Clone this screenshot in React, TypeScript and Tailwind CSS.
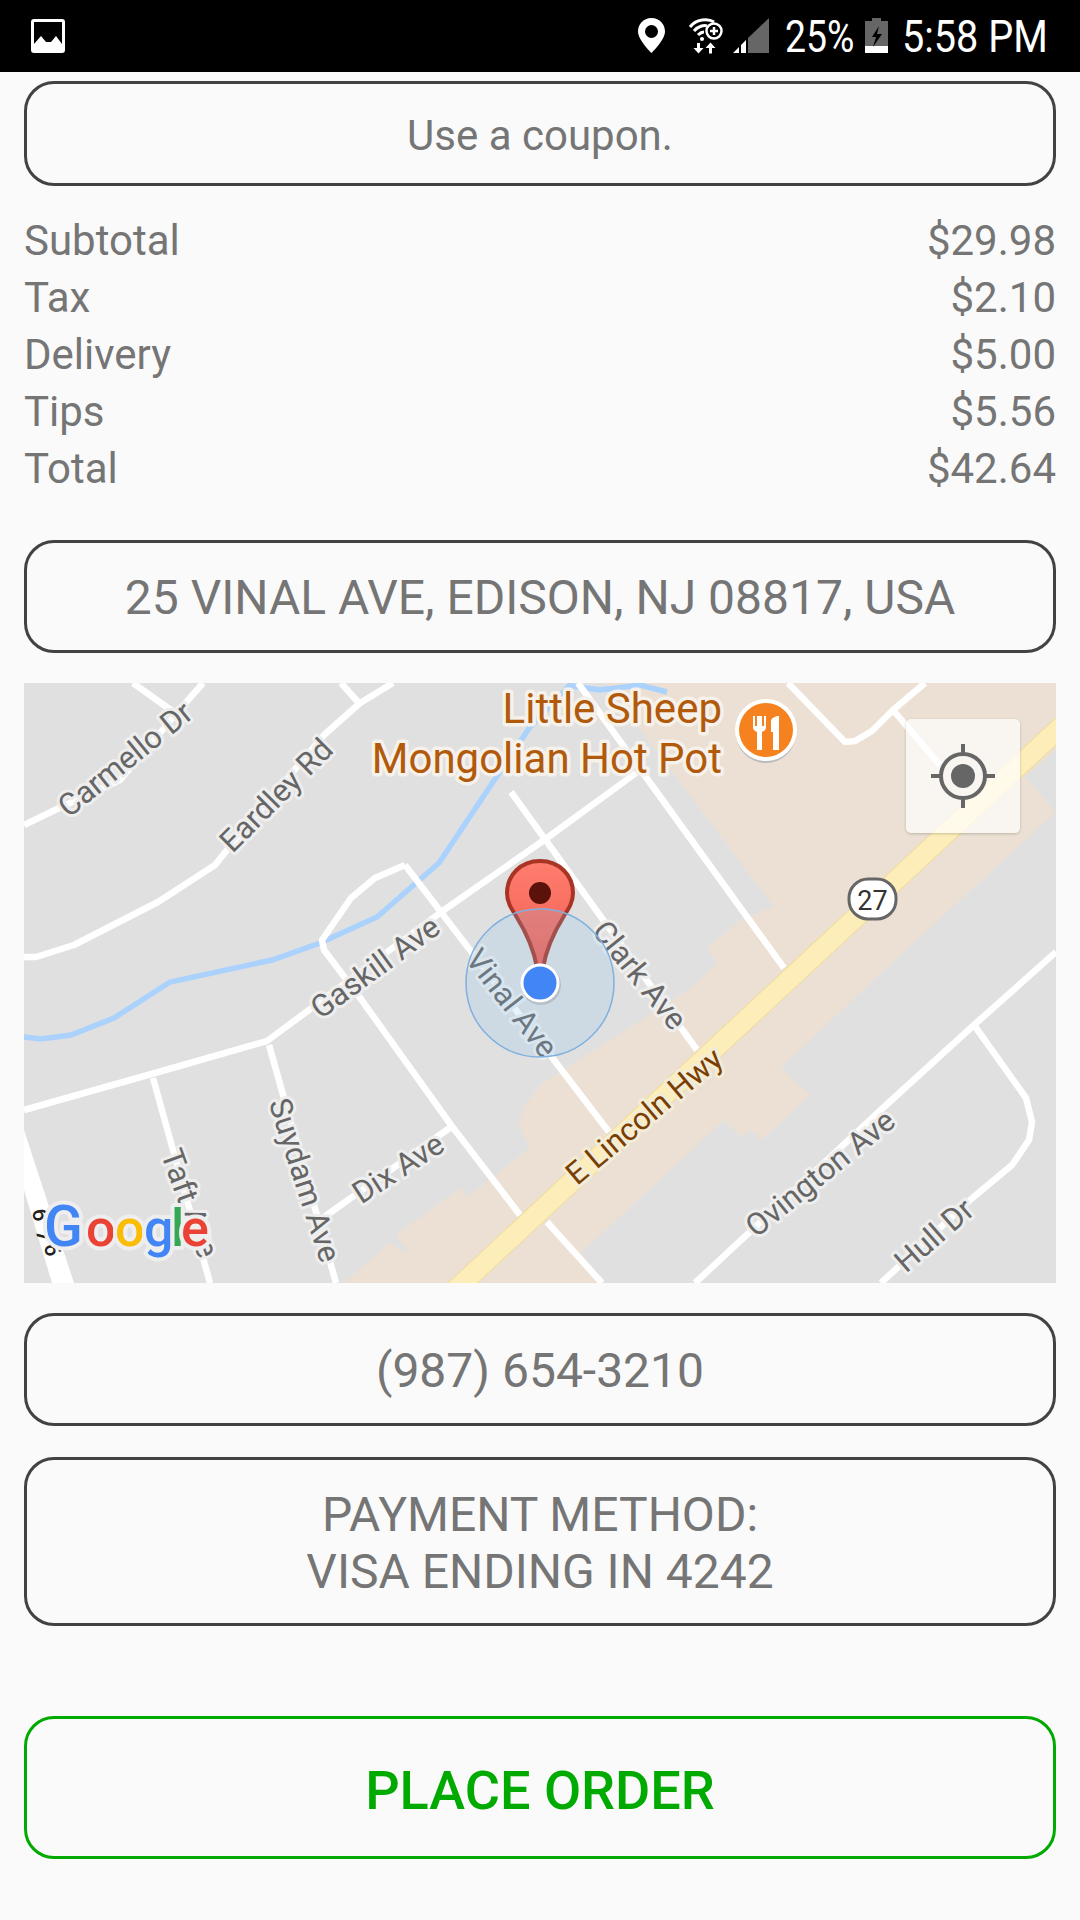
const rows = [
  { label: "Subtotal", value: "$29.98" },
  { label: "Tax", value: "$2.10" },
  { label: "Delivery", value: "$5.00" },
  { label: "Tips", value: "$5.56" },
  { label: "Total", value: "$42.64" },
];

const roads = [
  "M24 825 L57 809 L120 780 L182 707 L203 683",
  "M133 683 L175 713",
  "M24 957 L36 957 L74 945 L158 902 L215 865 L227 850 L324 735 L360 703 L393 683",
  "M341 683 L358 702",
  "M24 1110 L155 1073 L267 1041 L444 910 L547 838 L636 773",
  "M153 1078 L210 1283",
  "M269 1045 L336 1283",
  "M324 1217 L451 1127",
  "M578 683 L643 773 L784 968",
  "M511 792 L697 1050",
  "M405 865 L375 878 L351 898 L322 940 L324 950 L358 995 L451 1125 L520 1215",
  "M547 1222 L602 1283",
  "M405 865 L609 1132",
  "M695 1283 L884 1107 L974 1025 L1056 952",
  "M974 1025 L1026 1098 L1032 1122 L1029 1140 L1012 1165 L970 1200 L881 1283",
  "M788 683 L845 742 L855 741 L872 731 L893 710 L925 683",
  "M893 710 L940 765",
];

const labels = [
  { text: "Carmello Dr", x: 125, y: 759, a: -39 },
  { text: "Eardley Rd", x: 276, y: 795, a: -45 },
  { text: "Gaskill Ave", x: 375, y: 967, a: -36 },
  { text: "Vinal Ave", x: 512, y: 1003, a: 52 },
  { text: "Clark Ave", x: 640, y: 975, a: 51 },
  { text: "Ovington Ave", x: 820, y: 1173, a: -39 },
  { text: "Hull Dr", x: 934, y: 1235, a: -41 },
  { text: "Dix Ave", x: 398, y: 1168, a: -33 },
  { text: "Suydam Ave", x: 305, y: 1180, a: 72 },
  { text: "Taft Ave", x: 190, y: 1203, a: 70 },
];

const StatusBar = () => (
  <div className="h-[72px] bg-black relative">
    <svg width="1080" height="72" viewBox="0 0 1080 72" className="block">
      {/* picture icon */}
      <rect x="31" y="19" width="34" height="34" rx="3" fill="#fff" />
      <path d="M34 22H62V44L56 36L51 42L46 42L41 36L34 44Z" fill="#000" />
      {/* location pin */}
      <path
        fillRule="evenodd"
        d="M651.500 18C643 18 638 24.500 638 31.500C638 40 651.500 53 651.500 53C651.500 53 665 40 665 31.500C665 24.500 660 18 651.500 18ZM651.500 25A6.500 6.500 0 1 1 651.500 38A6.500 6.500 0 1 1 651.500 25Z"
        fill="#fff"
      />
      {/* wifi with plus and arrows */}
      <g fill="none" stroke="#fff" strokeWidth="3">
        <path d="M690 27C696 19 708 18 714 22" />
        <path d="M694 31C698 26 704 25 707 26" />
        <path d="M698 35C700 33 702 32 704 32" />
      </g>
      <circle cx="702" cy="39" r="2" fill="#fff" />
      <circle cx="714" cy="31" r="7.500" fill="#000" stroke="#fff" strokeWidth="2.500" />
      <path d="M714 27V35M710 31H718" stroke="#fff" strokeWidth="2.500" />
      <path d="M697 43H700V48H703.500L698.500 53.500L693.500 48H697Z" fill="#fff" />
      <path d="M709 53.500H712V48H715.500L710.500 42.500L705.500 48H709Z" fill="#fff" />
      {/* signal */}
      <path d="M748 38L769 18V53H748Z" fill="#666" />
      <path d="M733 53L739 47V53ZM741 45L746 40V53H741Z" fill="#fff" />
      {/* battery */}
      <path d="M872 18H881V21H888V46H865V21H872Z" fill="#666" />
      <rect x="865" y="46" width="23" height="7" fill="#fff" />
      <path d="M879 26L872 37H876L873 47L882 34H877Z" fill="#000" />
    </svg>
    <span className="absolute left-[785px] top-3 origin-left scale-x-[0.85] text-[44px] leading-[50px] text-white">25%</span>
    <span className="absolute left-[902px] top-3 origin-left scale-x-[0.9] text-[44px] leading-[50px] text-white">5:58 PM</span>
  </div>
);

const MapView = () => (
  <div className="relative mx-6 mt-[30px] h-[600px] overflow-hidden">
    <svg width="1032" height="600" viewBox="24 683 1032 600" className="block">
      <rect x="24" y="683" width="1032" height="600" fill="#e0e0e0" />
      {/* commercial area */}
      <path
        d="M606 683 L1056 683 L1056 812 L884 970 L781 1068 L810 1095 L762 1140 L750 1130 L741 1137 L724 1120 L581 1253 L605 1283 L344 1283 L389 1243 L408 1253 L396 1235 L460 1188 L467 1197 L492 1178 L530 1147 L518 1125 L524 1107 L540 1085 L688 990 L717 963 L707 948 L743 918 L774 907 L638 726 Z"
        fill="#ebe0d3"
      />
      <path d="M1025 777 L1056 750 L1056 812 Z" fill="#e0e0e0" />
      {/* river */}
      <path
        d="M24 1037 L41 1039 L71 1035 L114 1018 L170 982 L272 960 L320 943 L377 917 L439 863 L499 773 L530 727 L572 683 M572 686 L600 690 L640 685 L667 692"
        fill="none"
        stroke="#aad2fd"
        strokeWidth="5.500"
      />
      {roads.map((d, i) => (
        <path key={i} d={d} fill="none" stroke="#fff" strokeWidth="6.500" strokeLinejoin="round" />
      ))}
      <path d="M24 1130 L74 1283 L52 1283 L24 1190 Z" fill="#fff" />
      {/* highway */}
      <path d="M452 1293 L1067 721" stroke="#efdc9f" strokeWidth="21" fill="none" />
      <path d="M452 1293 L1067 721" stroke="#fdeeb9" strokeWidth="19" fill="none" />
      {labels.map((l) => (
        <text
          key={l.text}
          transform={`translate(${l.x} ${l.y}) rotate(${l.a})`}
          textAnchor="middle"
          dy="0.35em"
          fontSize="31"
          fill="#666"
          stroke="#eeeeee"
          strokeWidth="6"
          strokeLinejoin="round"
          paintOrder="stroke"
        >
          {l.text}
        </text>
      ))}
      <text
        transform="translate(644 1116) rotate(-40)"
        textAnchor="middle"
        dy="0.35em"
        fontSize="31"
        fill="#7a3e00"
        stroke="#f3ecd6"
        strokeWidth="6"
        strokeLinejoin="round"
        paintOrder="stroke"
      >
        E Lincoln Hwy
      </text>
      {/* restaurant */}
      <g fill="#b15a0b" stroke="#f6f1ea" strokeWidth="7" strokeLinejoin="round" paintOrder="stroke" fontSize="42" textAnchor="end">
        <text x="722" y="723">Little Sheep</text>
        <text x="722" y="773">Mongolian Hot Pot</text>
      </g>
      <circle cx="766" cy="733" r="30" fill="#bbb" />
      <circle cx="766" cy="730" r="31" fill="#fff" />
      <circle cx="766" cy="730" r="27" fill="#f5821f" />
      <path d="M753 716V727C753 730 755 731 757 732V750H762V732C764 731 766 730 766 727V716H764V726H762V716H757V726H755V716Z" fill="#fff" />
      <path d="M771 732V721C771 718 776 716 779 716V750H773V732Z" fill="#fff" />
      {/* route shield */}
      <rect x="849" y="879" width="47" height="40" rx="19" fill="#fff" stroke="#666" strokeWidth="3" />
      <text x="872.500" y="910" fontSize="27" textAnchor="middle" fill="#333">27</text>
      {/* stray digits under the logo */}
      <g fontSize="22" fontWeight="500" fill="#222">
        <text transform="translate(32 1210) rotate(80)">6</text>
        <text transform="translate(36 1231) rotate(80)">7</text>
        <text transform="translate(44 1245) rotate(80)">6</text>
      </g>
      {/* google */}
      <text
        x="44 86 115 144 171 181"
        y="1246"
        fontSize="52"
        fontWeight="500"
        stroke="#eeeeee"
        strokeWidth="8"
        strokeLinejoin="round"
        paintOrder="stroke"
      >
        <tspan fill="#4285f4" fontSize="57">G</tspan>
        <tspan fill="#ea4335">o</tspan>
        <tspan fill="#fbbc05">o</tspan>
        <tspan fill="#4285f4">g</tspan>
        <tspan fill="#34a853">l</tspan>
        <tspan fill="#ea4335">e</tspan>
      </text>
      {/* pin */}
      <defs>
        <linearGradient id="pin" x1="0" y1="0" x2="0" y2="1">
          <stop offset="0" stopColor="#ff7d6e" />
          <stop offset="1" stopColor="#ee5a4e" />
        </linearGradient>
      </defs>
      <path
        d="M540 861C521 861 507 875 507 893C507 902 511 908 516 916C526 932 534 950 537 968L540 985L543 968C546 950 554 932 564 916C569 908 573 902 573 893C573 875 559 861 540 861Z"
        fill="url(#pin)"
        stroke="#a93425"
        strokeWidth="4"
      />
      <circle cx="540" cy="893" r="11" fill="#5a120a" />
      {/* accuracy */}
      <circle cx="540" cy="983" r="74" fill="#86c2ef" fillOpacity="0.2" stroke="#7fb0e0" strokeWidth="1.500" />
      <circle cx="541" cy="985" r="20" fill="#000" fillOpacity="0.12" />
      <circle cx="540" cy="983" r="18" fill="#4285f4" stroke="#fff" strokeWidth="3" />
    </svg>
    <div className="absolute left-[882px] top-9 w-[114px] h-[114px] rounded-[5px] bg-white/70 shadow-[0_1px_3px_rgba(0,0,0,0.2)] flex items-center justify-center">
      <svg width="66" height="66" viewBox="0 0 66 66">
        <circle cx="33" cy="33" r="22" fill="none" stroke="#666" strokeWidth="4" />
        <circle cx="33" cy="33" r="12" fill="#666" />
        <path d="M33 1V11M33 55V65M1 33H11M55 33H65" stroke="#666" strokeWidth="4" />
      </svg>
    </div>
  </div>
);

const App = () => {
  return (
    <div className="w-[1080px] h-[1920px] overflow-hidden bg-[#fafafa] font-['Roboto',sans-serif] text-[#757575]">
      <StatusBar />
      <div className="mx-6 mt-[9px] h-[105px] pt-[3px] rounded-[30px] border-[3px] border-[#424242] flex items-center justify-center text-[42px]">
        Use a coupon.
      </div>
      <div className="mx-6 mt-[26px] flex flex-col text-[42px] leading-[57px]">
        {rows.map((r) => (
          <div key={r.label} className="flex justify-between">
            <span>{r.label}</span>
            <span>{r.value}</span>
          </div>
        ))}
      </div>
      <div className="mx-6 mt-[43px] h-[113px] pt-[3px] rounded-[30px] border-[3px] border-[#424242] flex items-center justify-center text-[48px]">
        25 VINAL AVE, EDISON, NJ 08817, USA
      </div>
      <MapView />
      <div className="mx-6 mt-[30px] h-[113px] pt-[3px] rounded-[30px] border-[3px] border-[#424242] flex items-center justify-center text-[48px]">
        (987) 654-3210
      </div>
      <div className="mx-6 mt-[31px] h-[169px] pt-[3px] rounded-[30px] border-[3px] border-[#424242] flex flex-col items-center justify-center text-[48px] leading-[57px]">
        <span>PAYMENT METHOD:</span>
        <span>VISA ENDING IN 4242</span>
      </div>
      <div className="mx-6 mt-[90px] h-[143px] pt-[5px] rounded-[30px] border-[3px] border-[#00aa00] flex items-center justify-center text-[54px] font-medium text-[#00aa00]">
        PLACE ORDER
      </div>
    </div>
  );
};

export default App;
